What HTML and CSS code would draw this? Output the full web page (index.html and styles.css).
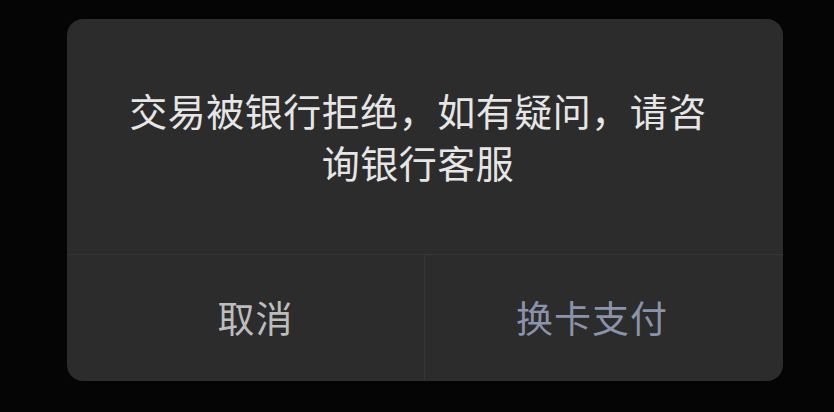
FILE: index.html
```html
<!DOCTYPE html>
<html lang="zh-CN">
<head>
<meta charset="utf-8">
<title>交易失败</title>
<link rel="stylesheet" href="styles.css">
</head>
<body>
<div class="screen">
  <div class="dialog">
    <div class="dialog-body">
      <p class="message">交易被银行拒绝，如有疑问，请咨<br>询银行客服</p>
    </div>
    <div class="dialog-actions">
      <button class="action action-cancel">取消</button>
      <button class="action action-primary">换卡支付</button>
    </div>
  </div>
</div>
</body>
</html>
```

FILE: styles.css
```css
html, body {
  margin: 0;
  padding: 0;
  background: #050505;
}

.screen {
  width: 834px;
  height: 412px;
  box-sizing: border-box;
  padding: 19px 0 0 67px;
  font-family: "Noto Sans CJK SC", "Noto Sans", sans-serif;
}

.dialog {
  width: 716px;
  height: 362px;
  background: #2c2c2c;
  border-radius: 16px;
  display: flex;
  flex-direction: column;
  overflow: hidden;
}

.dialog-body {
  height: 236px;
  padding: 0 14px 2px 0;
  display: flex;
  align-items: center;
  justify-content: center;
  border-bottom: 1px solid #363636;
  box-sizing: border-box;
}

.message {
  margin: 0;
  color: #e6e6e6;
  font-size: 38px;
  letter-spacing: 0.5px;
  line-height: 52px;
  text-align: center;
}

.dialog-actions {
  flex: 1;
  display: flex;
}

.action {
  flex: none;
  width: 50%;
  box-sizing: border-box;
  border: none;
  background: transparent;
  font-family: inherit;
  font-size: 37px;
  letter-spacing: 1px;
  padding: 0 0 2px 0;
  margin: 0;
}

.action-cancel {
  color: #bdbdbd;
  padding-left: 20px;
  border-right: 1px solid #363636;
}

.action-primary {
  color: #8b93ab;
  padding-right: 24px;
}
```
